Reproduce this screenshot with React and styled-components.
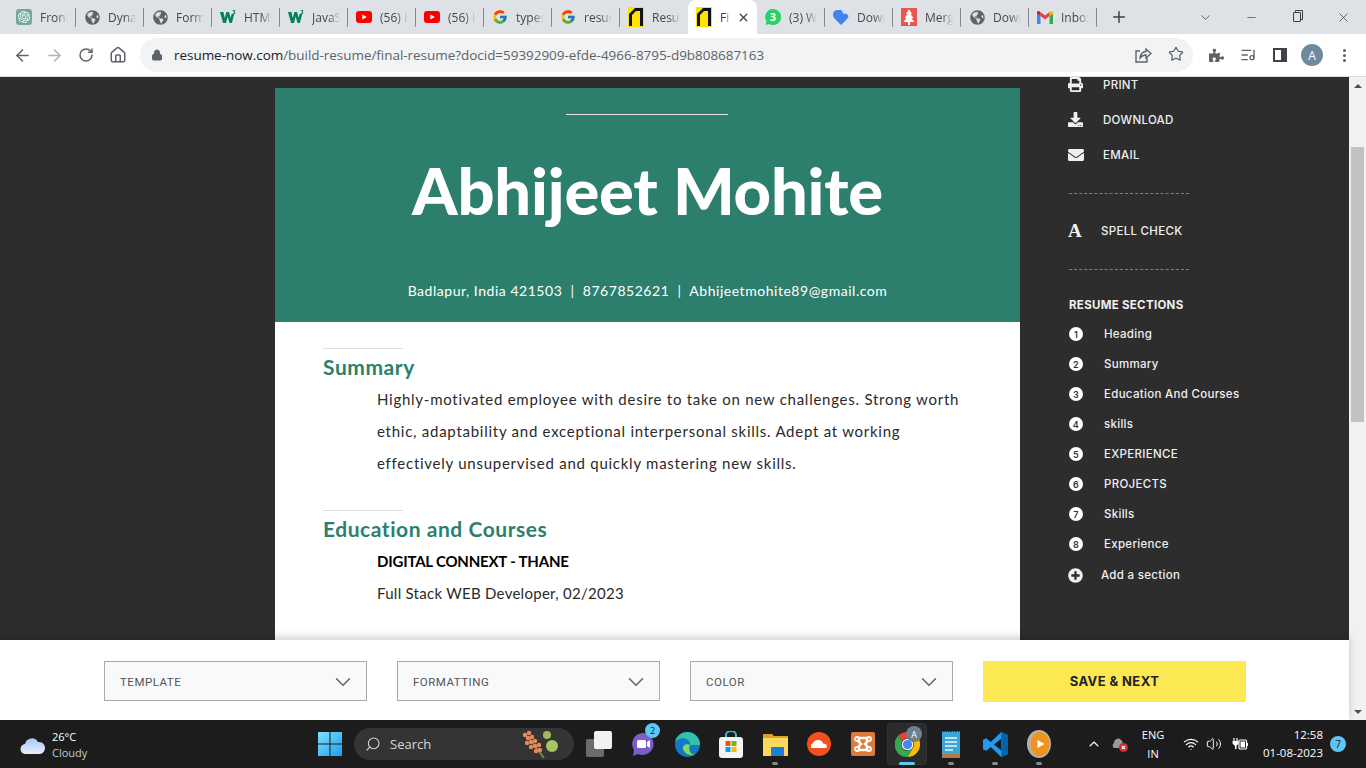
import styled, { createGlobalStyle } from "styled-components";
import {
  ArrowLeft,
  ArrowRight,
  RotateCw,
  Home,
  Lock,
  Star,
  ListMusic,
  EllipsisVertical,
  ChevronDown,
  ChevronUp,
  Minus,
  X,
  Plus,
  Search,
  Wifi,
  Volume2,
} from "lucide-react";
import { FaPrint, FaDownload, FaEnvelope, FaPlusCircle, FaGlobeAmericas, FaPuzzlePiece } from "react-icons/fa";
import { FcGoogle } from "react-icons/fc";
import { SiOpenai } from "react-icons/si";

const Global = createGlobalStyle`
  html, body { margin: 0; padding: 0; overflow: hidden; background: #2d2d2d; }
  * { box-sizing: border-box; }
`;

const Screen = styled.div`
  width: 1366px;
  height: 768px;
  display: flex;
  flex-direction: column;
  overflow: hidden;
  font-family: "Open Sans", sans-serif;
`;

/* browser chrome */
const TabStrip = styled.div`
  height: 34px;
  flex: none;
  display: flex;
  align-items: stretch;
  padding-left: 8px;
  background: #dee1e6;
`;

const Tab = styled.div`
  position: relative;
  width: ${({ $active }) => ($active ? "69px" : "68px")};
  display: flex;
  align-items: center;
  gap: 8px;
  padding-left: 8px;
  font-size: 12px;
  color: ${({ $active }) => ($active ? "#3c4043" : "#45494e")};
  background: ${({ $active }) => ($active ? "#fff" : "transparent")};
  border-radius: ${({ $active }) => ($active ? "8px 8px 0 0" : "0")};

  &::after {
    content: "";
    display: ${({ $divider }) => ($divider ? "block" : "none")};
    position: absolute;
    right: 0;
    top: 8px;
    height: 19px;
    width: 1px;
    background: #85888d;
  }
`;

const TabIcon = styled.span`
  width: 16px;
  height: 16px;
  flex: none;
  display: flex;
  align-items: center;
  justify-content: center;
`;

const TabTitle = styled.span`
  width: ${({ $short }) => ($short ? "10px" : "28px")};
  overflow: hidden;
  white-space: nowrap;
  -webkit-mask-image: linear-gradient(to right, #000 60%, transparent);
  mask-image: linear-gradient(to right, #000 60%, transparent);
`;

const TabClose = styled.span`
  display: flex;
  margin-left: -1px;
  color: #3c4043;
`;

const NewTab = styled.span`
  display: flex;
  align-items: center;
  margin-left: 13px;
  color: #3c4043;
`;

const WindowControls = styled.div`
  margin-left: auto;
  display: flex;
`;

const WindowButton = styled.span`
  width: 46px;
  display: flex;
  align-items: center;
  justify-content: center;
  color: #3c4043;
`;

const RestoreIcon = styled.span`
  position: relative;
  width: 8px;
  height: 10px;
  border: 1px solid #3c4043;
  border-radius: 1px;
  box-shadow: 2px -2px 0 -1px #dee1e6, 2px -2px 0 0 #3c4043;
`;

const Toolbar = styled.div`
  height: 43px;
  flex: none;
  display: flex;
  align-items: center;
  padding: 4px 6px;
  background: #fff;
  border-bottom: 1px solid #dadce0;
`;

const NavButton = styled.span`
  width: 32px;
  display: flex;
  justify-content: center;
  color: ${({ $muted }) => ($muted ? "#b0b3b7" : "#5f6368")};
`;

const UrlPill = styled.div`
  width: 1053px;
  height: 34px;
  margin: 0 7px 0 6px;
  padding: 0 9px 0 11px;
  flex: none;
  display: flex;
  align-items: center;
  border-radius: 17px;
  background: #f1f3f4;
  color: #5f6368;
`;

const UrlText = styled.span`
  margin-left: 11px;
  font-size: 13.5px;
  letter-spacing: -0.04px;
  white-space: nowrap;
  color: #5f6368;

  b {
    font-weight: 400;
    color: #202124;
  }
`;

const UrlActions = styled.span`
  margin-left: auto;
  display: flex;
  gap: 16px;
`;

const Avatar = styled.span`
  width: 22px;
  height: 22px;
  border-radius: 50%;
  display: flex;
  align-items: center;
  justify-content: center;
  background: #6f8a9a;
  color: #fff;
  font-size: 12px;
`;

const SidePanelIcon = styled.span`
  width: 14px;
  height: 14px;
  border: 2px solid #3f4347;
  border-right-width: 6px;
`;

/* page area */
const Middle = styled.div`
  flex: 1;
  display: flex;
  min-height: 0;
`;

const Viewport = styled.div`
  flex: 1;
  display: flex;
  flex-direction: column;
  min-width: 0;
`;

const Main = styled.main`
  flex: 1;
  min-height: 0;
  display: flex;
  overflow: hidden;
  padding-left: 275px;
  background: #2d2d2d;
`;

const Resume = styled.div`
  width: 745px;
  flex: none;
  margin-top: 11px;
  font-family: "Lato", sans-serif;
`;

const ResumeHead = styled.header`
  height: 234px;
  display: flex;
  flex-direction: column;
  align-items: center;
  padding-top: 26px;
  background: #2d7f6d;
  color: #fff;
`;

const HeadRule = styled.div`
  width: 162px;
  height: 1px;
  margin-left: -1px;
  background: #e6e0e0;
`;

const Name = styled.h1`
  margin: 33px 0 0;
  font-size: 65px;
  line-height: 84px;
  font-weight: 900;
  letter-spacing: -0.2px;
  white-space: nowrap;
`;

const Contact = styled.div`
  margin-top: 49px;
  font-size: 14px;
  line-height: 20px;
  letter-spacing: 0.53px;
  white-space: pre;
`;

const ResumeBody = styled.div`
  height: 320px;
  padding: 26px 48px 0;
  background: #fff;
`;

const Section = styled.section`
  margin-bottom: 31px;
`;

const SectionRule = styled.div`
  width: 80px;
  height: 1px;
  background: #e4dcdf;
`;

const SectionTitle = styled.h2`
  margin: 4px 0 0;
  font-size: 21px;
  line-height: 28px;
  font-weight: 700;
  letter-spacing: 0.55px;
  color: #2d7f6d;
`;

const SectionText = styled.div`
  margin: 2px 0 0 54px;
  font-size: 15px;
  line-height: 32px;
  letter-spacing: ${({ $track }) => $track}px;
  color: #2a2a2a;
  white-space: nowrap;
`;

const School = styled.div`
  font-weight: 700;
  letter-spacing: -0.2px;
  color: #000;
`;

/* right hand tools */
const Tools = styled.aside`
  margin: -10px 0 0 48px;
  width: 230px;
  font-family: "Inter", sans-serif;
  color: #f0f0f0;
`;

const ToolRow = styled.div`
  display: grid;
  grid-template-columns: ${({ $col }) => $col || 35}px 1fr;
  align-items: center;
  height: ${({ $h }) => $h || 35}px;
  font-size: 11.5px;
  font-weight: 500;
  white-space: nowrap;
  letter-spacing: 0.3px;
`;

const Dashed = styled.div`
  width: 120px;
  height: 1px;
  margin: ${({ $top }) => $top}px 0 ${({ $bottom }) => $bottom}px 1px;
  border-top: 1px dashed #808080;
`;

const SerifA = styled.span`
  font-family: "Liberation Serif", serif;
  font-size: 19px;
  font-weight: 700;
  line-height: 1;
`;

const SectionsLabel = styled.div`
  margin: 26px 0 5px 1px;
  height: 18px;
  line-height: 18px;
  font-size: 11.5px;
  font-weight: 700;
  letter-spacing: 0.3px;
`;

const NumberDot = styled.span`
  width: 14px;
  height: 14px;
  margin-left: 1px;
  border-radius: 50%;
  display: flex;
  align-items: center;
  justify-content: center;
  background: #fff;
  color: #333;
  font-size: 9px;
  font-weight: 600;
`;

const BottomBar = styled.div`
  position: relative;
  height: 80px;
  flex: none;
  display: flex;
  align-items: center;
  gap: 30px;
  padding: 2px 0 0 104px;
  background: #fff;
  box-shadow: 0 -3px 8px rgba(0, 0, 0, 0.18);
`;

const SelectBox = styled.div`
  width: 263px;
  height: 40px;
  display: flex;
  align-items: center;
  justify-content: space-between;
  padding: 1px 10px 0 15px;
  border: 1px solid #a9a9a9;
  background: #f8f9fb;
  color: #555;
  font-family: "Roboto", sans-serif;
  font-size: 11.5px;
  letter-spacing: 0.5px;
`;

const SaveButton = styled.div`
  width: 263px;
  height: 41px;
  display: flex;
  align-items: center;
  justify-content: center;
  background: #fbe853;
  color: #222;
  font-family: "Inter", sans-serif;
  font-size: 13px;
  font-weight: 700;
  letter-spacing: 0.4px;
`;

const ScrollBar = styled.div`
  width: 17px;
  flex: none;
  display: flex;
  flex-direction: column;
  align-items: center;
  background: #f1f1f1;
`;

const ScrollArrow = styled.span`
  height: 17px;
  flex: none;
  display: flex;
  align-items: center;
  justify-content: center;
  margin-top: ${({ $auto }) => ($auto ? "auto" : "0")};

  &::before {
    content: "";
    border-left: 4px solid transparent;
    border-right: 4px solid transparent;
    border-${({ $down }) => ($down ? "top" : "bottom")}: 4px solid #505050;
  }
`;

const ScrollThumb = styled.span`
  width: 13px;
  height: 275px;
  margin-top: 53px;
  background: #c1c1c1;
`;

/* taskbar */
const Taskbar = styled.footer`
  height: 48px;
  flex: none;
  display: flex;
  align-items: center;
  background: #1c1c1c;
  color: #fff;
  font-family: "Open Sans", sans-serif;
`;

const Weather = styled.div`
  width: 308px;
  flex: none;
  display: flex;
  align-items: center;
  gap: 6px;
  padding: 1px 0 0 20px;
  font-size: 11px;
  line-height: 16px;
`;

const Muted = styled.div`
  color: #c8c8c8;
`;

const App44 = styled.div`
  position: relative;
  width: 44px;
  height: 48px;
  flex: none;
  display: flex;
  align-items: center;
  justify-content: center;

  &::before {
    content: "";
    display: ${({ $active }) => ($active ? "block" : "none")};
    position: absolute;
    inset: 3px 2px;
    border-radius: 4px;
    background: #2b2b2b;
    border: 1px solid #333;
  }

  &::after {
    content: "";
    display: ${({ $running }) => ($running ? "block" : "none")};
    position: absolute;
    bottom: 3px;
    left: 50%;
    transform: translateX(-50%);
    width: ${({ $active }) => ($active ? "16px" : "6px")};
    height: 3px;
    border-radius: 2px;
    background: ${({ $active }) => ($active ? "#5cc8f5" : "#8a8a8a")};
  }

  svg {
    position: relative;
  }
`;

const SearchPill = styled.div`
  width: 220px;
  height: 32px;
  margin: 0 3px 0 2px;
  flex: none;
  display: flex;
  align-items: center;
  justify-content: space-between;
  padding: 0 15px 0 11px;
  border-radius: 16px;
  background: #343434;
  font-size: 13px;
  color: #d8d8d8;
`;

const SearchLabel = styled.span`
  display: flex;
  align-items: center;
  gap: 9px;
`;

const Badge = styled.span`
  position: absolute;
  top: ${({ $top }) => $top}px;
  right: ${({ $right }) => $right}px;
  width: ${({ $d }) => $d}px;
  height: ${({ $d }) => $d}px;
  border-radius: 50%;
  display: flex;
  align-items: center;
  justify-content: center;
  background: ${({ $bg }) => $bg};
  color: ${({ $fg }) => $fg};
  font-size: 9px;
`;

const Tray = styled.div`
  display: flex;
  align-items: center;
  margin-left: 25px;
`;

const TrayItem = styled.span`
  display: flex;
  justify-content: center;
  margin-left: ${({ $ml }) => $ml || 0}px;
  width: ${({ $w }) => $w || 16}px;
`;

const Lang = styled.div`
  width: 30px;
  margin-left: 10px;
  text-align: center;
  font-size: 11px;
  line-height: 19px;
`;

const Clock = styled.div`
  width: 70px;
  margin-left: 5px;
  text-align: right;
  font-size: 11.5px;
  line-height: 18px;
  white-space: nowrap;
`;

const NotifyDot = styled.span`
  width: 16px;
  height: 16px;
  margin-left: 7px;
  border-radius: 50%;
  display: flex;
  align-items: center;
  justify-content: center;
  background: #60c5f5;
  color: #10222c;
  font-size: 10px;
`;

/* small drawings */
const Globe = () => <FaGlobeAmericas size={15} color="#5f6368" />;

const W3 = () => (
  <svg width="16" height="16" viewBox="0 0 16 16">
    <path d="M0 3h3.400l1.400 6 1.600-6h2.600l1.600 6 1-4h2.600l-2.300 9H9.500L7.700 7.600 6 14H3.100z" fill="#04805a" />
    <path d="M12.600 1h2.600v.7l-.9.9c.6.1 1 .5 1 1.100 0 .8-.7 1.300-1.500 1.300-.5 0-1-.2-1.300-.5l.4-.6c.2.2.5.3.8.3.4 0 .6-.2.6-.5s-.3-.5-.9-.4l-.1-.5.8-1h-1.500z" fill="#04805a" />
  </svg>
);

const YouTube = () => (
  <svg width="16" height="16" viewBox="0 0 16 16">
    <rect y="2" width="16" height="12" rx="3" fill="#f00" />
    <path d="M6.400 5.400 10.800 8l-4.400 2.600z" fill="#fff" />
  </svg>
);

const ChatGpt = () => (
  <svg width="16" height="16" viewBox="0 0 16 16">
    <rect width="16" height="16" rx="3" fill="#74aa9c" />
    <SiOpenai x="2" y="2" size={12} color="#fff" />
  </svg>
);

const ResumeNow = () => (
  <svg width="16" height="20" viewBox="0 0 16 20">
    <rect width="16" height="20" fill="#ffe300" />
    <path d="M1 19V7l6-6h8v18h-3V4H8L4 8v11z" fill="#111" />
  </svg>
);

const WhatsApp = () => (
  <svg width="16" height="16" viewBox="0 0 16 16">
    <path d="M8 0a8 8 0 1 1-3.800 15L.5 16l1-3.600A8 8 0 0 1 8 0z" fill="#25d366" />
    <text x="8" y="12" textAnchor="middle" fontSize="11" fontWeight="700" fill="#fff" fontFamily="Open Sans">3</text>
  </svg>
);

const Heart = () => (
  <svg width="16" height="16" viewBox="0 0 16 16">
    <path d="M4 1h4l2 2 5 3c1 1 0 3-1 4l-6 6-6-6C0 8-.5 6 .5 3.500 1 2 2.500 1 4 1z" fill="#3f84f0" />
    <path d="M9 0l5 4-4 1z" fill="#cfe0fb" />
  </svg>
);

const Tree = () => (
  <svg width="16" height="18" viewBox="0 0 16 18">
    <rect width="16" height="18" fill="#e8574e" />
    <path d="M8 1l3 5H9.500l3 4h-2l3 4H9v3H7v-3H2.500l3-4h-2l3-4H5z" fill="#fff" />
  </svg>
);

const Gmail = () => (
  <svg width="16" height="13" viewBox="0 0 16 13">
    <path d="M0 2v11h3.500V5z" fill="#4285f4" />
    <path d="M12.500 5v8H16V2z" fill="#34a853" />
    <path d="M12.500 1v4L16 2.500V1.500C16 .3 14.500-.4 13.500.4z" fill="#fbbc04" />
    <path d="M3.500 5V1L8 4.400 12.500 1v4L8 8.400z" fill="#ea4335" />
    <path d="M0 1.500v1L3.500 5V1L2.500.4C1.500-.4 0 .3 0 1.500z" fill="#c5221f" />
  </svg>
);

const ShareBox = () => (
  <svg width="18" height="18" viewBox="0 0 18 18" fill="none" stroke="#5f6368" strokeWidth="1.400">
    <path d="M6 5H2v11h11v-4" />
    <path d="M6 12c0-4 3-6.500 6-6.500V3l5 4.500-5 4.500V9c-2.500 0-4.500 1-6 3z" />
  </svg>
);

const BatteryPlug = () => (
  <svg width="16" height="14" viewBox="0 0 16 14">
    <path d="M2 1v3M5 1v3" stroke="#fff" strokeWidth="1.200" />
    <path d="M.5 4h6v2.500L4.500 9v3H3V9L.5 6.500z" fill="#fff" />
    <rect x="7" y="3" width="7.500" height="9" rx="1" fill="none" stroke="#fff" strokeWidth="1.200" />
    <rect x="8.500" y="4.500" width="4.500" height="6" fill="#fff" />
    <rect x="14.500" y="6" width="1.500" height="3" fill="#fff" />
  </svg>
);

const CloudIcon = () => (
  <svg width="26" height="20" viewBox="0 0 26 20">
    <defs>
      <linearGradient id="wx" x1="0" y1="0" x2="0" y2="1">
        <stop offset="0" stopColor="#a8c8f5" />
        <stop offset="1" stopColor="#e8eefc" />
      </linearGradient>
    </defs>
    <path d="M6 19a5 5 0 0 1-1-10 7 7 0 0 1 13-2 6 6 0 0 1 2 12z" fill="url(#wx)" />
  </svg>
);

const WinLogo = () => (
  <svg width="24" height="24" viewBox="0 0 24 24">
    <defs>
      <linearGradient id="wn" x1="0" y1="0" x2="1" y2="1">
        <stop offset="0" stopColor="#7fe0fb" />
        <stop offset="1" stopColor="#1a9ff0" />
      </linearGradient>
    </defs>
    <path d="M0 0h11.500v11.500H0zM12.500 0H24v11.500H12.500zM0 12.500h11.500V24H0zM12.500 12.500H24V24H12.500z" fill="url(#wn)" />
  </svg>
);

const Flowers = () => (
  <svg width="38" height="32" viewBox="0 0 38 32">
    <path d="M8 10l15 20" stroke="#7b8a3c" strokeWidth="2" fill="none" />
    <g fill="#e88a5c">
      <circle cx="4" cy="7" r="2.200" />
      <circle cx="8" cy="5" r="2.200" />
      <circle cx="7" cy="10" r="2.200" />
      <circle cx="11" cy="9" r="2.200" />
      <circle cx="6" cy="15" r="2.200" />
      <circle cx="10" cy="14" r="2.200" />
      <circle cx="14" cy="13" r="2.200" />
      <circle cx="10" cy="19" r="2.200" />
      <circle cx="14" cy="18" r="2.200" />
      <circle cx="18" cy="17" r="2.200" />
      <circle cx="15" cy="23" r="2.200" />
      <circle cx="19" cy="22" r="2.200" />
    </g>
    <ellipse cx="26" cy="7" rx="4" ry="4" fill="#9dbb5a" />
    <ellipse cx="31" cy="18" rx="6" ry="6" fill="#a8c465" />
  </svg>
);

const TaskView = () => (
  <svg width="26" height="26" viewBox="0 0 26 26">
    <rect x="0" y="8" width="18" height="18" rx="2" fill="#6b6b6b" />
    <rect x="8" y="0" width="18" height="18" rx="2" fill="#f2f2f2" />
  </svg>
);

const Teams = () => (
  <svg width="24" height="26" viewBox="0 0 24 26">
    <path d="M12 2a11 11 0 1 1-5 21l-5 2 1-6A11 11 0 0 1 12 2z" fill="#7b5fc9" />
    <rect x="6" y="9" width="9" height="8" rx="1.500" fill="#fff" />
    <path d="M16 11l3-2v8l-3-2z" fill="#fff" />
  </svg>
);

const Edge = () => (
  <svg width="25" height="25" viewBox="0 0 25 25">
    <circle cx="12.500" cy="12.500" r="12.500" fill="#1279c8" />
    <path d="M25 12.500C25 6 19.500 0 12.500 0 6 0 1 4.500 0 10c3-4 9-5 13-2 2 1.500 2.500 3.500 2 5h9z" fill="#35c1a8" />
    <path d="M15 13c-3-2-8 0-7 4s6 7 12 6c-5-1-7-5-5-10z" fill="#7fdc5f" />
  </svg>
);

const Store = () => (
  <svg width="24" height="27" viewBox="0 0 24 27">
    <path d="M7 7V4a5 4 0 0 1 10 0v3" fill="none" stroke="#39b6e8" strokeWidth="2" />
    <rect y="6" width="24" height="21" rx="3" fill="#f4f4f4" />
    <rect x="6.500" y="10" width="5" height="5" fill="#f25022" />
    <rect x="12.500" y="10" width="5" height="5" fill="#7fba00" />
    <rect x="6.500" y="16" width="5" height="5" fill="#00a4ef" />
    <rect x="12.500" y="16" width="5" height="5" fill="#ffb900" />
  </svg>
);

const Explorer = () => (
  <svg width="25" height="24" viewBox="0 0 25 24">
    <path d="M0 2h9l2 2h14v20H0z" fill="#d9a520" />
    <rect y="6" width="25" height="18" fill="#fbd75b" />
    <rect x="8" y="15" width="13" height="9" rx="1" fill="#1a7fd4" />
  </svg>
);

const SoundCloud = () => (
  <svg width="24" height="24" viewBox="0 0 24 24">
    <circle cx="12" cy="12" r="12" fill="#f2501c" />
    <path d="M4 16v-3c0-1 1-1.500 2-1.500.5-2 2.500-3.500 5-3.500 3 0 5 2 5.500 4 1.500-.5 3.500.5 3.500 2.200S19 16 18 16z" fill="#fff" />
  </svg>
);

const Xampp = () => (
  <svg width="24" height="24" viewBox="0 0 24 24">
    <rect width="24" height="24" rx="2" fill="#e2793a" />
    <path d="M8 6h8v4l-2 2 2 2v4H8v-4l2-2-2-2z" fill="none" stroke="#fff" strokeWidth="2.500" />
    <circle cx="6" cy="7" r="2" fill="none" stroke="#fff" strokeWidth="1.800" />
    <circle cx="18" cy="7" r="2" fill="none" stroke="#fff" strokeWidth="1.800" />
    <circle cx="6" cy="17" r="2" fill="none" stroke="#fff" strokeWidth="1.800" />
    <circle cx="18" cy="17" r="2" fill="none" stroke="#fff" strokeWidth="1.800" />
  </svg>
);

const Chrome = () => (
  <svg width="25" height="25" viewBox="0 0 24 24">
    <path d="M12 0a12 12 0 0 1 10.400 6H12a6 6 0 0 0-5.200 3L3.400 3.300A12 12 0 0 1 12 0z" fill="#ea4335" />
    <path d="M22.400 6A12 12 0 0 1 12 24l5.200-9A6 6 0 0 0 16 7.500z" fill="#fbbc04" />
    <path d="M12 24A12 12 0 0 1 3.400 3.300L6.800 9a6 6 0 0 0 5.200 9l5.200-3z" fill="#34a853" />
    <circle cx="12" cy="12" r="5" fill="#4285f4" stroke="#fff" strokeWidth="1.200" />
  </svg>
);

const Notepad = () => (
  <svg width="18" height="28" viewBox="0 0 18 28">
    <rect y="1" width="18" height="26" rx="1" fill="#3ba7d9" />
    <rect y="24" width="18" height="4" fill="#b5793a" />
    <path d="M3 8h12M3 12h12M3 16h12M3 20h8" stroke="#e8f6fc" strokeWidth="1.600" />
    <path d="M1 1h16" stroke="#123" strokeWidth="2" strokeDasharray="1.500 1" />
  </svg>
);

const VsCode = () => (
  <svg width="25" height="25" viewBox="0 0 24 24">
    <path d="M17.500 0 24 3v18l-6.500 3-10-9.500L3 18l-3-1.500v-9L3 6l4.500 3.500z" fill="#1f9cf0" />
    <path d="M17.500 6.500 10.500 12l7 5.500z" fill="#1c1c1c" />
    <path d="M17.500 0 24 3v18l-6.500 3z" fill="#0065a9" />
  </svg>
);

const Player = () => (
  <svg width="24" height="28" viewBox="0 0 24 28">
    <ellipse cx="12" cy="14" rx="12" ry="14" fill="#b8b0a8" />
    <ellipse cx="13" cy="14" rx="9.500" ry="12" fill="#f0921e" />
    <path d="M10.500 10l7 4-7 4z" fill="#fff" />
  </svg>
);

const CloudOff = () => (
  <svg width="16" height="16" viewBox="0 0 16 16">
    <path d="M2 12a3 3 0 0 1 0-5 4 4 0 0 1 7-3c2 1 2 4 2 8z" fill="#9a9a9a" />
    <circle cx="11.500" cy="11.500" r="4.500" fill="#d8262c" />
    <path d="M9.800 9.800l3.400 3.400m0-3.400-3.400 3.400" stroke="#fff" strokeWidth="1.200" />
  </svg>
);

const tabs = [
  { icon: <ChatGpt />, title: "Front", divider: true },
  { icon: <Globe />, title: "Dynam", divider: true },
  { icon: <Globe />, title: "Form", divider: true },
  { icon: <W3 />, title: "HTML", divider: true },
  { icon: <W3 />, title: "JavaS", divider: true },
  { icon: <YouTube />, title: "(56) F", divider: true },
  { icon: <YouTube />, title: "(56) H", divider: true },
  { icon: <FcGoogle size={16} />, title: "types", divider: true },
  { icon: <FcGoogle size={16} />, title: "resum", divider: true },
  { icon: <ResumeNow />, title: "Resum" },
  { icon: <ResumeNow />, title: "Fi", active: true },
  { icon: <WhatsApp />, title: "(3) W", divider: true },
  { icon: <Heart />, title: "Down", divider: true },
  { icon: <Tree />, title: "Merg", divider: true },
  { icon: <Globe />, title: "Down", divider: true },
  { icon: <Gmail />, title: "Inbox", divider: true },
];

const sections = ["Heading", "Summary", "Education And Courses", "skills", "EXPERIENCE", "PROJECTS", "Skills", "Experience"];

const apps = [
  { icon: <TaskView /> },
  { icon: <Teams />, badge: "2" },
  { icon: <Edge /> },
  { icon: <Store /> },
  { icon: <Explorer />, running: true },
  { icon: <SoundCloud /> },
  { icon: <Xampp /> },
  { icon: <Chrome />, running: true, active: true, badge: "A" },
  { icon: <Notepad />, running: true },
  { icon: <VsCode />, running: true },
  { icon: <Player />, running: true },
];

export default function App() {
  return (
    <Screen>
      <Global />
      <TabStrip>
        {tabs.map((t, i) => (
          <Tab key={i} $active={t.active} $divider={t.divider}>
            <TabIcon>{t.icon}</TabIcon>
            <TabTitle $short={t.active}>{t.title}</TabTitle>
            {t.active && (
              <TabClose>
                <X size={13} strokeWidth={2.4} />
              </TabClose>
            )}
          </Tab>
        ))}
        <NewTab>
          <Plus size={18} strokeWidth={2} />
        </NewTab>
        <WindowControls>
          <WindowButton>
            <ChevronDown size={15} strokeWidth={1.2} />
          </WindowButton>
          <WindowButton>
            <Minus size={13} strokeWidth={1.2} />
          </WindowButton>
          <WindowButton>
            <RestoreIcon />
          </WindowButton>
          <WindowButton>
            <X size={15} strokeWidth={1.2} />
          </WindowButton>
        </WindowControls>
      </TabStrip>

      <Toolbar>
        <NavButton>
          <ArrowLeft size={19} strokeWidth={2} />
        </NavButton>
        <NavButton $muted>
          <ArrowRight size={19} strokeWidth={2} />
        </NavButton>
        <NavButton>
          <RotateCw size={16} strokeWidth={2.2} />
        </NavButton>
        <NavButton>
          <Home size={18} strokeWidth={2} />
        </NavButton>
        <UrlPill>
          <Lock size={12} fill="#5f6368" strokeWidth={2} />
          <UrlText>
            <b>resume-now.com</b>/build-resume/final-resume?docid=59392909-efde-4966-8795-d9b808687163
          </UrlText>
          <UrlActions>
            <ShareBox />
            <Star size={16} strokeWidth={1.8} />
          </UrlActions>
        </UrlPill>
        <NavButton>
          <FaPuzzlePiece size={15} />
        </NavButton>
        <NavButton>
          <ListMusic size={16} />
        </NavButton>
        <NavButton>
          <SidePanelIcon />
        </NavButton>
        <NavButton>
          <Avatar>A</Avatar>
        </NavButton>
        <NavButton>
          <EllipsisVertical size={17} strokeWidth={2.4} />
        </NavButton>
      </Toolbar>

      <Middle>
        <Viewport>
          <Main>
            <Resume>
              <ResumeHead>
                <HeadRule />
                <Name>Abhijeet Mohite</Name>
                <Contact>Badlapur, India 421503  |  8767852621  |  Abhijeetmohite89@gmail.com</Contact>
              </ResumeHead>
              <ResumeBody>
                <Section>
                  <SectionRule />
                  <SectionTitle>Summary</SectionTitle>
                  <SectionText $track={0.74}>
                    Highly-motivated employee with desire to take on new challenges. Strong worth
                    <br />
                    ethic, adaptability and exceptional interpersonal skills. Adept at working
                    <br />
                    effectively unsupervised and quickly mastering new skills.
                  </SectionText>
                </Section>
                <Section>
                  <SectionRule />
                  <SectionTitle>Education and Courses</SectionTitle>
                  <SectionText $track={0.27}>
                    <School>DIGITAL CONNEXT - THANE</School>
                    Full Stack WEB Developer, 02/2023
                  </SectionText>
                </Section>
              </ResumeBody>
            </Resume>
            <Tools>
              <ToolRow>
                <FaPrint size={15} />
                PRINT
              </ToolRow>
              <ToolRow>
                <FaDownload size={15} />
                DOWNLOAD
              </ToolRow>
              <ToolRow>
                <FaEnvelope size={16} />
                EMAIL
              </ToolRow>
              <Dashed $top={21} $bottom={19} />
              <ToolRow $col={33}>
                <SerifA>A</SerifA>
                SPELL CHECK
              </ToolRow>
              <Dashed $top={21} $bottom={0} />
              <SectionsLabel>RESUME SECTIONS</SectionsLabel>
              {sections.map((s, i) => (
                <ToolRow key={s} $h={30} $col={36}>
                  <NumberDot>{i + 1}</NumberDot>
                  {s}
                </ToolRow>
              ))}
              <ToolRow $h={32} $col={33}>
                <FaPlusCircle size={15} />
                Add a section
              </ToolRow>
            </Tools>
          </Main>
          <BottomBar>
            {["TEMPLATE", "FORMATTING", "COLOR"].map((label) => (
              <SelectBox key={label}>
                {label}
                <ChevronDown size={26} strokeWidth={1.4} color="#666" />
              </SelectBox>
            ))}
            <SaveButton>SAVE &amp; NEXT</SaveButton>
          </BottomBar>
        </Viewport>
        <ScrollBar>
          <ScrollArrow />
          <ScrollThumb />
          <ScrollArrow $auto $down />
        </ScrollBar>
      </Middle>

      <Taskbar>
        <Weather>
          <CloudIcon />
          <div>
            <div>26°C</div>
            <Muted>Cloudy</Muted>
          </div>
        </Weather>
        <App44>
          <WinLogo />
        </App44>
        <SearchPill>
          <SearchLabel>
            <Search size={16} strokeWidth={1.6} style={{ transform: "scaleX(-1)" }} />
            Search
          </SearchLabel>
          <Flowers />
        </SearchPill>
        {apps.map((a, i) => (
          <App44 key={i} $running={a.running} $active={a.active}>
            {a.icon}
            {a.badge === "2" && (
              <Badge $top={3} $right={5} $d={15} $bg="#5cc8f5" $fg="#10222c">
                2
              </Badge>
            )}
            {a.badge === "A" && (
              <Badge $top={6} $right={7} $d={16} $bg="#6f7f8c" $fg="#fff">
                A
              </Badge>
            )}
          </App44>
        ))}
        <Tray>
          <TrayItem>
            <ChevronUp size={16} strokeWidth={1.6} />
          </TrayItem>
          <TrayItem $ml={10}>
            <CloudOff />
          </TrayItem>
          <Lang>
            ENG
            <br />
            IN
          </Lang>
          <TrayItem $ml={15}>
            <Wifi size={16} strokeWidth={1.8} />
          </TrayItem>
          <TrayItem $ml={7}>
            <Volume2 size={16} strokeWidth={1.4} />
          </TrayItem>
          <TrayItem $ml={10}>
            <BatteryPlug />
          </TrayItem>
          <Clock>
            12:58
            <br />
            01-08-2023
          </Clock>
          <NotifyDot>7</NotifyDot>
        </Tray>
      </Taskbar>
    </Screen>
  );
}
